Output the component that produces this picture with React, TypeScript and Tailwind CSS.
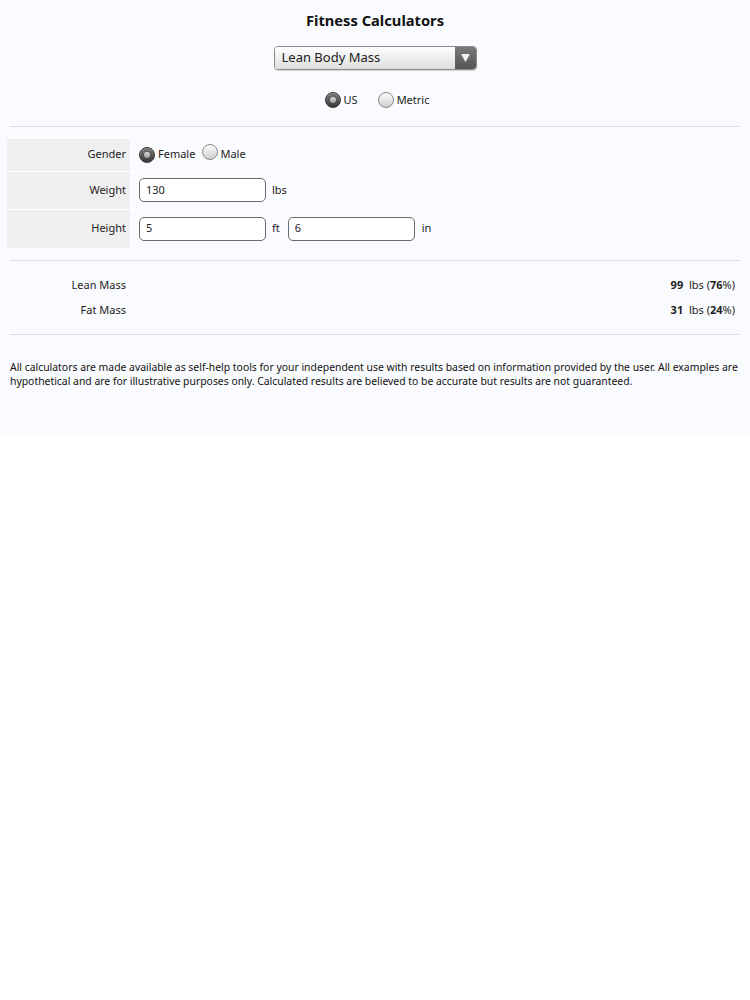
import React from "react";

function Radio({ checked }: { checked: boolean }) {
  return checked ? (
    <span className="inline-flex h-[16px] w-[16px] items-center justify-center rounded-full border border-[#333] bg-gradient-to-b from-[#777] to-[#3a3a3a] shadow-[inset_0_1px_1px_rgba(255,255,255,0.3)]">
      <span className="h-[6px] w-[6px] rounded-full bg-gradient-to-b from-[#ddd] to-[#999]" />
    </span>
  ) : (
    <span className="inline-block h-[16px] w-[16px] rounded-full border border-[#888] bg-gradient-to-b from-[#fdfdfd] to-[#cfcfcf]" />
  );
}

function Input({ value }: { value: string }) {
  return (
    <div className="flex h-[24px] w-[127px] items-center rounded-[5px] border border-[#6a6a6a] bg-white px-[6px] text-[11px] text-[#222]">
      {value}
    </div>
  );
}

export default function App() {
  return (
    <div className="min-h-[1000px] bg-white font-['Noto_Sans',sans-serif] text-[#222]">
      <div className="bg-[#fafbfe] pb-[48px]">
        <h1 className="pt-[10px] text-center text-[14.7px] font-bold leading-[20px] text-[#111]">
          Fitness Calculators
        </h1>
        <div className="mt-[16px] flex justify-center">
          <div className="flex h-[24px] w-[203px] items-stretch overflow-hidden rounded-[4px] border border-[#8a8a8a] shadow-[0_1px_1px_rgba(0,0,0,0.15)]">
            <div className="flex flex-1 items-center bg-gradient-to-b from-[#ffffff] to-[#dedede] pl-[7px] text-[13px] text-[#222]">
              Lean Body Mass
            </div>
            <div className="flex w-[21px] items-center justify-center bg-gradient-to-b from-[#7a7a7a] to-[#555]">
              <svg width="9" height="8" viewBox="0 0 9 8">
                <path d="M0 0 H9 L4.5 8 Z" fill="#f2f2f2" />
              </svg>
            </div>
          </div>
        </div>
        <div className="mt-[22px] flex justify-center text-[11px]">
          <label className="ml-[4px] flex items-center gap-[3px]">
            <Radio checked />
            <span>US</span>
          </label>
          <label className="ml-[20px] flex items-center gap-[3px]">
            <Radio checked={false} />
            <span>Metric</span>
          </label>
        </div>
        <div className="mx-[10px] mt-[17px] border-t border-[#dcdcdc]" />

        <div className="ml-[7px] mt-[11px] text-[11px]">
          <div className="flex h-[33px] items-center pt-[1px]">
            <div className="flex h-full w-[123px] items-center justify-end bg-[#efefef] pr-[4px]">Gender</div>
            <div className="ml-[9px] flex items-center">
              <Radio checked />
              <span className="ml-[3px]">Female</span>
              <span className="ml-[7px]"><Radio checked={false} /></span>
              <span className="ml-[2px]">Male</span>
            </div>
          </div>
          <div className="flex h-[38px] items-center border-t border-white">
            <div className="flex h-full w-[123px] items-center justify-end bg-[#efefef] pr-[4px]">Weight</div>
            <div className="ml-[9px] flex items-center">
              <Input value="130" />
              <span className="ml-[6px]">lbs</span>
            </div>
          </div>
          <div className="flex h-[39px] items-center border-t border-white">
            <div className="flex h-full w-[123px] items-center justify-end bg-[#efefef] pr-[4px]">Height</div>
            <div className="ml-[9px] flex items-center">
              <Input value="5" />
              <span className="ml-[6px]">ft</span>
              <span className="ml-[8px]"><Input value="6" /></span>
              <span className="ml-[7px]">in</span>
            </div>
          </div>
        </div>

        <div className="mx-[10px] mt-[12px] border-t border-[#dcdcdc]" />

        <div className="ml-[7px] mr-[15px] mt-[12px] text-[11px]">
          <div className="flex h-[25px] items-center">
            <div className="w-[123px] pr-[4px] text-right">Lean Mass</div>
            <div className="flex-1 text-right">
              <b>99</b>&nbsp;&nbsp;lbs (<b>76</b>%)
            </div>
          </div>
          <div className="flex h-[25px] items-center">
            <div className="w-[123px] pr-[4px] text-right">Fat Mass</div>
            <div className="flex-1 text-right">
              <b>31</b>&nbsp;&nbsp;lbs (<b>24</b>%)
            </div>
          </div>
        </div>

        <div className="mx-[10px] mt-[11px] border-t border-[#dcdcdc]" />

        <p className="mx-[10px] mt-[25px] text-[10.4px] leading-[14px] text-[#111]">
          All calculators are made available as self-help tools for your independent use with results based on information provided by the user. All examples are hypothetical and are for illustrative purposes only. Calculated results are believed to be accurate but results are not guaranteed.
        </p>
      </div>
    </div>
  );
}
